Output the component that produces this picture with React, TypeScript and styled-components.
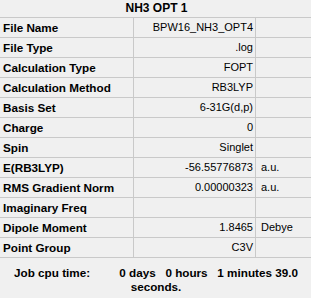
import React from "react";
import styled, { createGlobalStyle } from "styled-components";

const Global = createGlobalStyle`
  html, body {
    margin: 0;
    padding: 0;
    background: #f0f0f0;
  }
  body {
    font-family: "Liberation Sans", Arial, sans-serif;
    color: #000;
    overflow: hidden;
  }
`;

const Panel = styled.div`
  width: 311px;
  height: 298px;
  background: #f0f0f0;
  display: flex;
  flex-direction: column;
`;

const Title = styled.div`
  height: 17px;
  line-height: 16px;
  text-align: center;
  font-weight: bold;
  font-size: 12px;
  padding-left: 2px;
`;

const Table = styled.table`
  border-collapse: collapse;
  table-layout: fixed;
  width: 312px;
  font-size: 11px;
`;

const Row = styled.tr`
  height: 20px;
  border-top: 1px solid #c9c9c9;
  border-bottom: 1px solid #c9c9c9;
`;

const Label = styled.td`
  width: 130px;
  padding: 0 0 0 3px;
  font-weight: bold;
  font-size: 11.7px;
  white-space: nowrap;
  border-right: 1px solid #c9c9c9;
  height: 19px;
  line-height: 19px;
`;

const Value = styled.td`
  width: 119px;
  padding: 0 2px 0 0;
  text-align: right;
  white-space: nowrap;
  border-right: 1px solid #c9c9c9;
  line-height: 19px;
`;

const Unit = styled.td`
  padding: 0 0 0 5px;
  white-space: nowrap;
  line-height: 19px;
`;

const Footer = styled.div`
  padding-top: 8px;
  text-align: center;
  font-weight: bold;
  font-size: 11.7px;
  line-height: 14px;
  white-space: pre;
  padding-left: 1px;
`;

type Prop = { label: string; value: string; unit?: string };

const props: Prop[] = [
  { label: "File Name", value: "BPW16_NH3_OPT4" },
  { label: "File Type", value: ".log" },
  { label: "Calculation Type", value: "FOPT" },
  { label: "Calculation Method", value: "RB3LYP" },
  { label: "Basis Set", value: "6-31G(d,p)" },
  { label: "Charge", value: "0" },
  { label: "Spin", value: "Singlet" },
  { label: "E(RB3LYP)", value: "-56.55776873", unit: "a.u." },
  { label: "RMS Gradient Norm", value: "0.00000323", unit: "a.u." },
  { label: "Imaginary Freq", value: "" },
  { label: "Dipole Moment", value: "1.8465", unit: "Debye" },
  { label: "Point Group", value: "C3V" },
];

export default function App() {
  return (
    <Panel>
      <Global />
      <Title>NH3 OPT 1</Title>
      <Table>
        <tbody>
          {props.map((p) => (
            <Row key={p.label}>
              <Label>{p.label}</Label>
              <Value>{p.value}</Value>
              <Unit>{p.unit ?? ""}</Unit>
            </Row>
          ))}
        </tbody>
      </Table>
      <Footer>
        {"Job cpu time:         0 days   0 hours   1 minutes 39.0"}
        <br />
        {"seconds."}
      </Footer>
    </Panel>
  );
}
